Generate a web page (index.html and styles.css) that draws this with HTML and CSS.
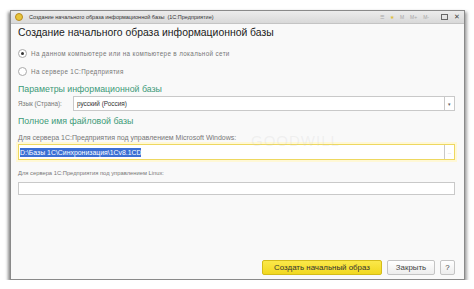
FILE: index.html
```html
<!DOCTYPE html>
<html lang="ru">
<head>
    <meta charset="UTF-8">
    <title>Создание начального образа информационной базы</title>
    <link rel="stylesheet" href="styles.css">
</head>
<body>
    <div class="window">
        <div class="titlebar">
            <span class="app-icon"></span>
            <span class="title">Создание начального образа информационной базы&nbsp;&nbsp;(1С:Предприятие)</span>
            <div class="title-tools">
                <span class="tool">&#9776;</span>
                <span class="tool star">&#9733;</span>
                <span class="tool">M</span>
                <span class="tool">M+</span>
                <span class="tool">M-</span>
                <span class="tool box"></span>
                <span class="tool close">&#10005;</span>
            </div>
        </div>

        <div class="content">
            <h1>Создание начального образа информационной базы</h1>

            <label class="radio-row"><span class="radio checked"></span>На данном компьютере или на компьютере в локальной сети</label>
            <label class="radio-row"><span class="radio"></span>На сервере 1С:Предприятия</label>

            <h2>Параметры информационной базы</h2>
            <div class="field-row">
                <span class="field-label">Язык (Страна):</span>
                <div class="input">
                    <span class="value">русский (Россия)</span>
                    <span class="drop">&#9662;</span>
                </div>
            </div>

            <h2 class="second">Полное имя файловой базы</h2>
            <div class="caption">Для сервера 1С:Предприятия под управлением Microsoft Windows:</div>
            <div class="input focused">
                <span class="value"><span class="selected">D:\Базы 1С\Синхронизация\1Cv8.1CD</span></span>
                <span class="drop dots">...</span>
            </div>
            <div class="caption linux">Для сервера 1С:Предприятия под управлением Linux:</div>
            <div class="input plain"></div>
            <span class="watermark">GOODWILL</span>
        </div>

        <div class="footer">
            <button class="btn primary">Создать начальный образ</button>
            <button class="btn">Закрыть</button>
            <button class="btn help">?</button>
        </div>
    </div>
</body>
</html>
```

FILE: styles.css
```css
:root {
    --green: #3d9a78;
    --text: #4a4a4a;
    --border: #c9c9c9;
}

body {
    margin: 0;
    background: #ffffff;
    font-family: "Liberation Sans", Arial, sans-serif;
    color: var(--text);
}

.window {
    margin: 10px 0 0 10px;
    width: 453px;
    height: 268px;
    background: #f9f9f9;
    border: 1px solid #8a8a8a;
    box-shadow: -2px 2px 3px rgba(0,0,0,0.45), 2px 2px 3px rgba(0,0,0,0.35);
    display: flex;
    flex-direction: column;
    position: relative;
}

.titlebar {
    height: 12px;
    display: flex;
    align-items: center;
    background: linear-gradient(#ececec, #d9d9d9);
    border-bottom: 1px solid #c4c4c4;
    padding: 0 4px;
    font-size: 5.5px;
    color: #333;
}

.app-icon {
    width: 6px;
    height: 6px;
    border-radius: 50%;
    background: #e8c53a;
    border: 1px solid #b88b20;
    margin-right: 6px;
}

.title {
    flex: 1;
    white-space: nowrap;
}

.title-tools {
    display: flex;
    align-items: center;
    gap: 6px;
    color: #a8a8a8;
    font-size: 5px;
}

.tool.star {
    color: #e0c040;
}

.tool.box {
    width: 5px;
    height: 4px;
    border: 1px solid #666;
    margin-left: 6px;
}

.tool.close {
    color: #444;
    font-size: 7px;
}

.content {
    flex: 1;
    padding: 3px 9px 0 7px;
    position: relative;
}

h1 {
    margin: 0 0 9px;
    font-size: 10.4px;
    line-height: 12px;
    font-weight: normal;
    color: #222;
}

.radio-row {
    display: flex;
    align-items: center;
    font-size: 6.3px;
    letter-spacing: 0.35px;
    color: #777;
    height: 10px;
    margin-bottom: 8px;
}

.radio {
    width: 7px;
    height: 7px;
    border: 1px solid #aaa;
    border-radius: 50%;
    background: #fff;
    margin-right: 4px;
    position: relative;
}

.radio.checked::after {
    content: "";
    position: absolute;
    left: 2px;
    top: 2px;
    width: 3px;
    height: 3px;
    border-radius: 50%;
    background: #333;
}

h2 {
    margin: 4px 0 2px;
    font-size: 8.8px;
    line-height: 10px;
    font-weight: normal;
    color: var(--green);
}

h2.second {
    margin-top: 5px;
}

.field-row {
    display: flex;
    align-items: center;
}

.field-label {
    width: 55px;
    font-size: 6.3px;
    color: #777;
}

.input {
    flex: 1;
    height: 13px;
    display: flex;
    align-items: center;
    background: #fff;
    border: 1px solid var(--border);
    font-size: 6.4px;
    color: #333;
}

.input .value {
    flex: 1;
    padding-left: 3px;
}

.drop {
    width: 9px;
    height: 100%;
    border-left: 1px solid var(--border);
    font-size: 5px;
    color: #666;
    display: flex;
    align-items: center;
    justify-content: center;
}

.drop.dots {
    font-size: 4px;
    color: #999;
}

.caption {
    font-size: 7px;
    line-height: 8px;
    color: #777;
    margin: 8px 0 2px;
}

.caption.linux {
    font-size: 5.8px;
    margin: 9px 0 5px;
}

.input.focused {
    border: 1px solid #eed860;
    box-shadow: 0 0 0 2px #fff8d6;
    height: 14px;
}

.input.focused .value {
    padding-left: 1px;
}

.selected {
    background: #3b6fd4;
    color: #fff;
    padding: 1px 0;
    font-size: 6.9px;
}

.input.plain {
    height: 11px;
}

.watermark {
    position: absolute;
    left: 240px;
    top: 108px;
    font-size: 15px;
    letter-spacing: 1px;
    color: rgba(200,200,200,0.2);
}

.footer {
    display: flex;
    justify-content: flex-end;
    gap: 5px;
    padding: 0 9px 4px 0;
}

.btn {
    height: 15px;
    padding: 0 6px;
    font-family: "Liberation Sans", Arial, sans-serif;
    font-size: 7.9px;
    color: #444;
    background: linear-gradient(#ffffff, #ededed);
    border: 1px solid #c4c4c4;
    border-radius: 2px;
}

.btn.primary {
    width: 120px;
    background: linear-gradient(#fbe84a, #f1d820);
    border-color: #d4bc1a;
    color: #333;
}

.btn:nth-child(2) {
    width: 48px;
}

.btn.help {
    width: 15px;
    padding: 0;
}
```
